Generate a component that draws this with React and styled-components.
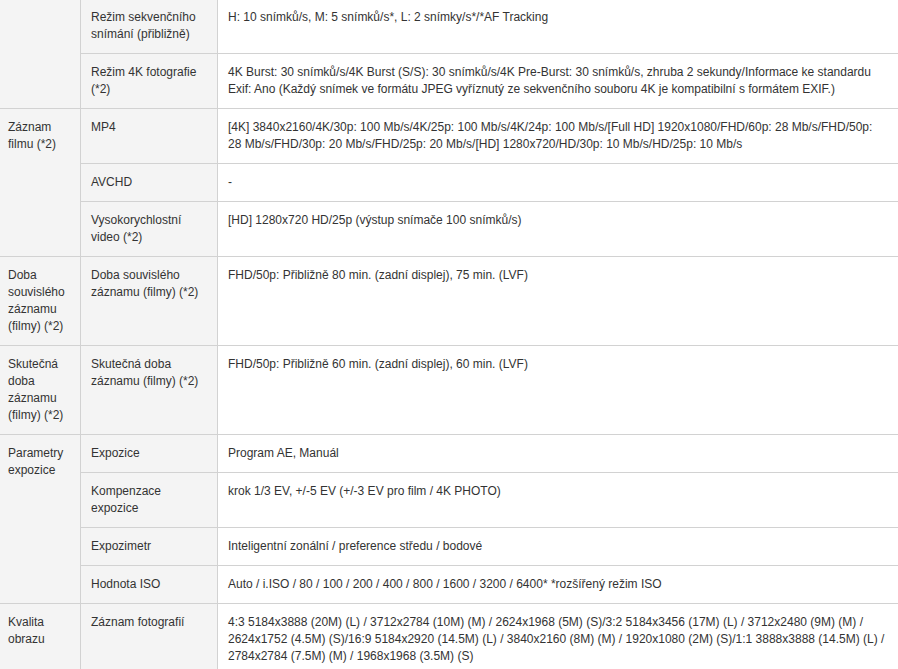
import React from "react";
import styled, { createGlobalStyle } from "styled-components";

const Global = createGlobalStyle`
  html, body { margin: 0; padding: 0; background: #ffffff; overflow: hidden; }
  body { font-family: "Liberation Sans", Arial, sans-serif; }
`;

const Wrap = styled.div`
  margin: -2px 0 0 -2px;
  width: 900px;
`;

const Table = styled.table`
  width: 900px;
  border-collapse: collapse;
  table-layout: fixed;
  font-family: "Liberation Sans", Arial, sans-serif;
  font-size: 12px;
  line-height: 17px;
  color: #333333;
`;

const Col = styled.col`
  width: ${(p) => p.$w}px;
`;

const Cell = styled.td`
  border: 1px solid #d2d2d2;
  padding: 10px 10px 10px ${(p) => (p.$first ? 9 : 10)}px;
  vertical-align: top;
  text-align: left;
  background: ${(p) => (p.$value ? "#ffffff" : "#f4f4f4")};
  word-wrap: break-word;
`;

const rows = [
  {
    cat: "",
    items: [
      ["Režim sekvenčního snímání (přibližně)", "H: 10 snímků/s, M: 5 snímků/s*, L: 2 snímky/s*/*AF Tracking"],
      [
        "Režim 4K fotografie (*2)",
        "4K Burst: 30 snímků/s/4K Burst (S/S): 30 snímků/s/4K Pre-Burst: 30 snímků/s, zhruba 2 sekundy/Informace ke standardu Exif: Ano (Každý snímek ve formátu JPEG vyříznutý ze sekvenčního souboru 4K je kompatibilní s formátem EXIF.)",
      ],
    ],
  },
  {
    cat: "Záznam filmu (*2)",
    items: [
      [
        "MP4",
        "[4K] 3840x2160/4K/30p: 100 Mb/s/4K/25p: 100 Mb/s/4K/24p: 100 Mb/s/[Full HD] 1920x1080/FHD/60p: 28 Mb/s/FHD/50p: 28 Mb/s/FHD/30p: 20 Mb/s/FHD/25p: 20 Mb/s/[HD] 1280x720/HD/30p: 10 Mb/s/HD/25p: 10 Mb/s",
      ],
      ["AVCHD", "-"],
      ["Vysokorychlostní video (*2)", "[HD] 1280x720 HD/25p (výstup snímače 100 snímků/s)"],
    ],
  },
  {
    cat: "Doba souvislého záznamu (filmy) (*2)",
    items: [["Doba souvislého záznamu (filmy) (*2)", "FHD/50p: Přibližně 80 min. (zadní displej), 75 min. (LVF)"]],
  },
  {
    cat: "Skutečná doba záznamu (filmy) (*2)",
    items: [["Skutečná doba záznamu (filmy) (*2)", "FHD/50p: Přibližně 60 min. (zadní displej), 60 min. (LVF)"]],
  },
  {
    cat: "Parametry expozice",
    items: [
      ["Expozice", "Program AE, Manuál"],
      ["Kompenzace expozice", "krok 1/3 EV, +/-5 EV (+/-3 EV pro film / 4K PHOTO)"],
      ["Expozimetr", "Inteligentní zonální / preference středu / bodové"],
      ["Hodnota ISO", "Auto / i.ISO / 80 / 100 / 200 / 400 / 800 / 1600 / 3200 / 6400* *rozšířený režim ISO"],
    ],
  },
  {
    cat: "Kvalita obrazu",
    items: [
      [
        "Záznam fotografií",
        "4:3 5184x3888 (20M) (L) / 3712x2784 (10M) (M) / 2624x1968 (5M) (S)/3:2 5184x3456 (17M) (L) / 3712x2480 (9M) (M) / 2624x1752 (4.5M) (S)/16:9 5184x2920 (14.5M) (L) / 3840x2160 (8M) (M) / 1920x1080 (2M) (S)/1:1 3888x3888 (14.5M) (L) / 2784x2784 (7.5M) (M) / 1968x1968 (3.5M) (S)",
      ],
    ],
  },
];

export default function App() {
  return (
    <>
      <Global />
      <Wrap>
        <Table>
          <colgroup>
            <Col $w={82} />
            <Col $w={137} />
            <Col $w={681} />
          </colgroup>
          <tbody>
            {rows.flatMap((group, gi) =>
              group.items.map(([label, value], i) => (
                <tr key={`${gi}-${i}`}>
                  {i === 0 && (
                    <Cell $first rowSpan={group.items.length}>
                      {group.cat}
                    </Cell>
                  )}
                  <Cell>{label}</Cell>
                  <Cell $value>{value}</Cell>
                </tr>
              ))
            )}
          </tbody>
        </Table>
      </Wrap>
    </>
  );
}
